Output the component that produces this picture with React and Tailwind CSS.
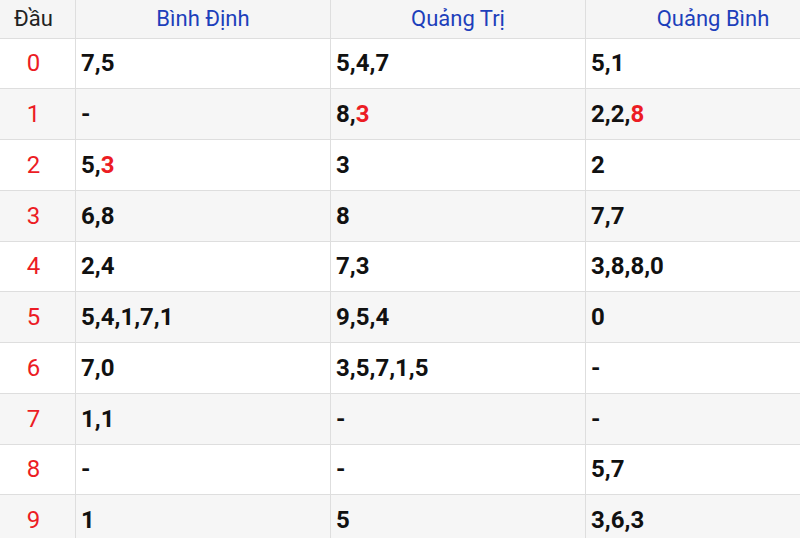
import React from 'react'

const provinces = ['Bình Định', 'Quảng Trị', 'Quảng Bình']

// "*" marks a digit shown in red
const rows = [
    ['7,5', '5,4,7', '5,1'],
    ['-', '8,*3', '2,2,*8'],
    ['5,*3', '3', '2'],
    ['6,8', '8', '7,7'],
    ['2,4', '7,3', '3,8,8,0'],
    ['5,4,1,7,1', '9,5,4', '0'],
    ['7,0', '3,5,7,1,5', '-'],
    ['1,1', '-', '-'],
    ['-', '-', '5,7'],
    ['1', '5', '3,6,3'],
]

const Cell = ({ value }) => {
    const parts = value.split(',')
    return (
        <span>
            {parts.map((p, i) => {
                const red = p.startsWith('*')
                const txt = red ? p.slice(1) : p
                return (
                    <React.Fragment key={i}>
                        {i > 0 && ','}
                        <span className={red ? 'text-[#ec1c24]' : ''}>{txt}</span>
                    </React.Fragment>
                )
            })}
        </span>
    )
}

const App = () => {
    return (
        <div className="w-[800px] h-[538px] overflow-hidden bg-white" style={{ fontFamily: 'Roboto, sans-serif' }}>
            <div className="w-[840px]">
                <div className="flex h-[38.5px] bg-[#f5f5f5] border-b border-[#dedede]">
                    <div className="w-[75px] shrink-0 pr-2 flex items-center justify-center text-[22px] text-[#222]">Đầu</div>
                    {provinces.map((p) => (
                        <div
                            key={p}
                            className="w-[255px] shrink-0 border-l border-[#dedede] flex items-center justify-center text-[22px] text-[#1d3fbb]"
                        >
                            {p}
                        </div>
                    ))}
                </div>
                {rows.map((r, i) => (
                    <div
                        key={i}
                        className={`flex h-[50.75px] border-b border-[#dedede] ${i % 2 === 1 ? 'bg-[#f6f6f6]' : 'bg-white'}`}
                    >
                        <div className="w-[75px] shrink-0 pr-2 flex items-center justify-center text-[24px] text-[#ec1c24]">
                            {i}
                        </div>
                        {r.map((v, j) => (
                            <div
                                key={j}
                                className="w-[255px] shrink-0 border-l border-[#dedede] flex items-center pl-[5px] text-[24px] font-bold text-[#111]"
                            >
                                <Cell value={v} />
                            </div>
                        ))}
                    </div>
                ))}
            </div>
        </div>
    )
}

export default App
